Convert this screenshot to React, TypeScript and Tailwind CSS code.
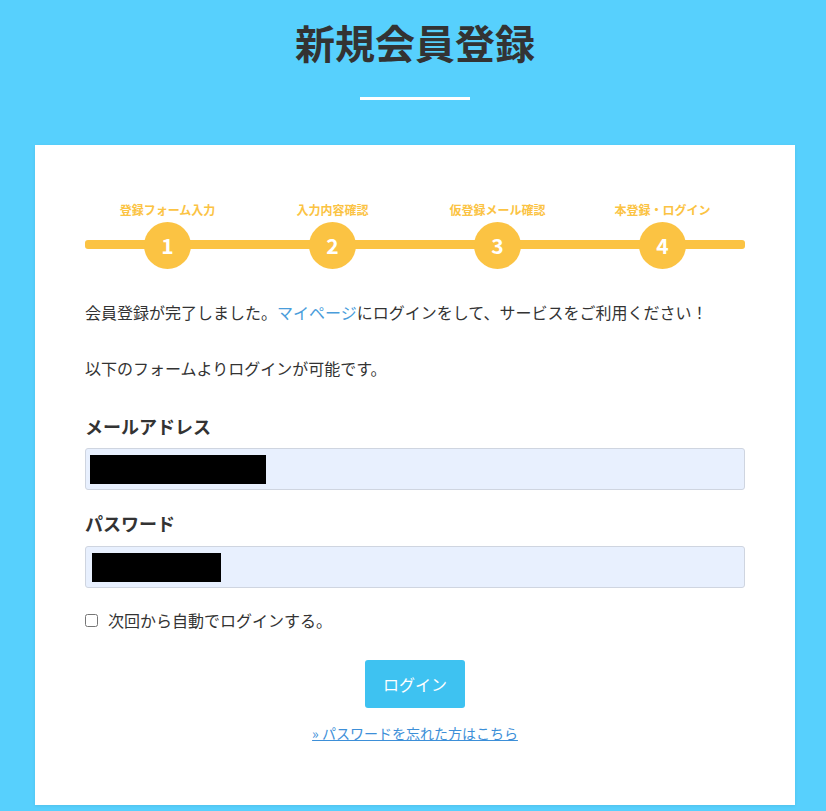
import React, { useState } from 'react';

const steps = ['登録フォーム入力', '入力内容確認', '仮登録メール確認', '本登録・ログイン'];

const App: React.FC = () => {
  const [remember, setRemember] = useState<boolean>(false);

  return (
    <div
      className="min-h-[811px] bg-[#57d0fd] pb-[7px] text-[#333]"
      style={{ fontFamily: '"Noto Sans CJK JP", "Noto Sans", sans-serif' }}
    >
      <div className="ml-[35px] mr-[31px]">
        <div className="flex flex-col items-center pt-[12px]">
          <h1 className="text-[40px] font-bold leading-[60px] tracking-[0px] text-[#333]">
            新規会員登録
          </h1>
          <div className="mt-[25px] h-[3px] w-[110px] bg-white" />
        </div>

        <div className="mt-[45px] bg-white px-[50px] pb-[62px] pt-[57px] shadow-[0_1px_3px_rgba(0,0,0,0.08)]">
          {/* steps */}
          <div className="relative">
            <div className="absolute left-0 right-0 top-[38px] h-[9px] rounded-[3px] bg-[#fbc343]" />
            <div className="relative grid grid-cols-4">
              {steps.map((label, i) => (
                <div key={i} className="flex flex-col items-center">
                  <div className="text-[12px] font-bold leading-[16px] text-[#fbc343]">{label}</div>
                  <div className="mt-[4px] flex h-[47px] w-[47px] items-center justify-center rounded-full bg-[#fbc343] text-[21px] font-bold text-white">
                    {i + 1}
                  </div>
                </div>
              ))}
            </div>
          </div>

          <p className="mt-[31px] text-[16px] leading-[24px]">
            会員登録が完了しました。
            <a href="#" className="text-[#4a9ddb]">
              マイページ
            </a>
            にログインをして、サービスをご利用ください！
          </p>
          <p className="mt-[32px] text-[16px] leading-[24px]">以下のフォームよりログインが可能です。</p>

          <label className="mt-[33px] block text-[18px] font-bold leading-[26px]">メールアドレス</label>
          <div className="mt-[9px] flex h-[42px] items-center rounded-[3px] border border-[#cfd5e0] bg-[#e8f0fe] px-[4px]">
            <div className="h-[29px] w-[176px] bg-black" />
          </div>

          <label className="mt-[20px] block text-[18px] font-bold leading-[26px]">パスワード</label>
          <div className="mt-[10px] flex h-[42px] items-center rounded-[3px] border border-[#cfd5e0] bg-[#e8f0fe] px-[6px]">
            <div className="h-[29px] w-[129px] bg-black" />
          </div>

          <label className="mt-[20px] flex items-center gap-[10px] text-[16px] leading-[24px]">
            <input
              type="checkbox"
              checked={remember}
              onChange={(e) => setRemember(e.target.checked)}
              className="h-[13px] w-[13px]"
            />
            次回から自動でログインする。
          </label>

          <div className="mt-[28px] flex justify-center">
            <button
              type="button"
              className="h-[48px] w-[100px] rounded-[3px] bg-[#3ec2f1] text-[16px] text-white"
            >
              ログイン
            </button>
          </div>

          <div className="mt-[14px] text-center leading-[20px]">
            <a href="#" className="text-[14px] text-[#3d8fd8] underline">
              » パスワードを忘れた方はこちら
            </a>
          </div>
        </div>
      </div>
    </div>
  );
};

export default App;
